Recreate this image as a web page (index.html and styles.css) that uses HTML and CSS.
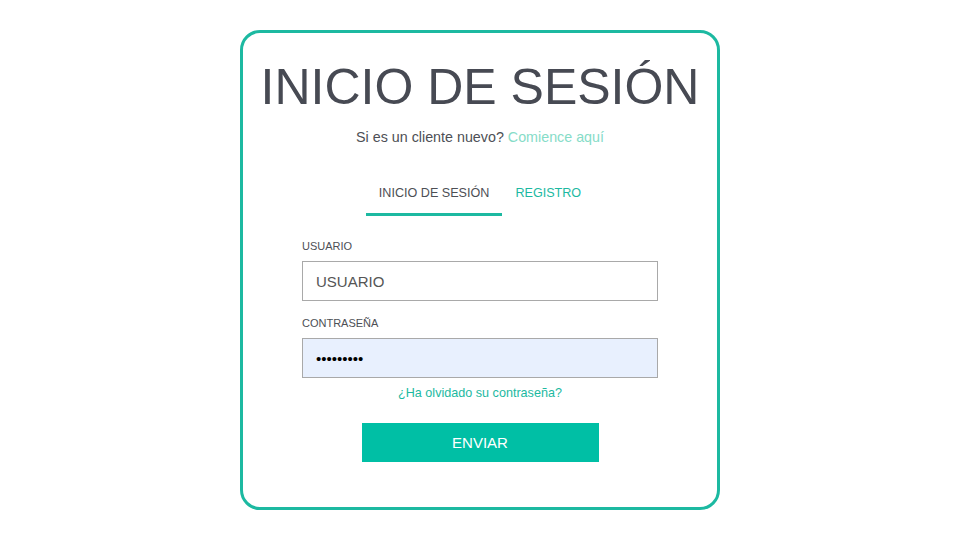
FILE: index.html
```html
<!DOCTYPE html>
<html lang="es">
<head>
    <meta charset="UTF-8">
    <meta name="viewport" content="width=device-width, initial-scale=1.0">
    <title>Inicio de sesión</title>
    <link rel="stylesheet" href="styles.css">
</head>
<body>
    <div class="login-card">
        <h1 class="login-title">INICIO DE SESIÓN</h1>
        <p class="login-sub">Si es un cliente nuevo? <a href="#" class="sub-link">Comience aquí</a></p>

        <div class="tabs">
            <a href="#" class="tab active">INICIO DE SESIÓN</a>
            <a href="#" class="tab">REGISTRO</a>
        </div>

        <form class="login-form">
            <label for="user" class="field-label">USUARIO</label>
            <input type="text" id="user" class="field" value="USUARIO">

            <label for="pass" class="field-label">CONTRASEÑA</label>
            <input type="password" id="pass" class="field filled" value="123456789">

            <a href="#" class="forgot">¿Ha olvidado su contraseña?</a>

            <button type="button" class="submit-btn">ENVIAR</button>
        </form>
    </div>
</body>
</html>
```

FILE: styles.css
```css
body {
    margin: 0;
    padding: 0;
    height: 100vh;
    display: flex;
    justify-content: center;
    align-items: center;
    background: #fff;
    font-family: "Liberation Sans", Arial, sans-serif;
}

.login-card {
    box-sizing: border-box;
    width: 480px;
    height: 480px;
    border: 3px solid #1cb9a1;
    border-radius: 20px;
    display: flex;
    flex-direction: column;
    align-items: center;
}

.login-title {
    margin: 25px 0 0;
    font-size: 50px;
    font-weight: normal;
    line-height: 58px;
    color: #474a53;
}

.login-sub {
    margin: 12px 0 0;
    font-size: 14.3px;
    line-height: 18px;
    color: #4d4f55;
}

.sub-link {
    color: #86dcc8;
    text-decoration: none;
}

.tabs {
    display: flex;
    margin-top: 39px;
}

.tab {
    padding: 0 13px 12px;
    font-size: 12.6px;
    line-height: 16px;
    color: #1cb9a1;
    text-decoration: none;
    border-bottom: 3px solid transparent;
}

.tab.active {
    color: #4d4f55;
    border-bottom-color: #1cb9a1;
}

.login-form {
    width: 356px;
    display: flex;
    flex-direction: column;
    margin-top: 24px;
}

.field-label {
    font-size: 11px;
    line-height: 13px;
    color: #4d4f55;
    margin-bottom: 8px;
}

.field {
    box-sizing: border-box;
    height: 40px;
    margin: 0 0 16px;
    padding: 0 13px;
    border: 1px solid #a9a9a9;
    font-family: "Liberation Sans", Arial, sans-serif;
    font-size: 15px;
    color: #555;
    background: #fff;
    outline: none;
}

.field.filled {
    background: #e8f0fe;
    color: #000;
    margin-bottom: 7px;
}

.forgot {
    align-self: center;
    font-size: 12.6px;
    line-height: 16px;
    color: #1cb9a1;
    text-decoration: none;
}

.submit-btn {
    align-self: center;
    width: 237px;
    height: 39px;
    margin-top: 22px;
    border: none;
    background: #00bfa5;
    color: #fff;
    font-family: "Liberation Sans", Arial, sans-serif;
    font-size: 15px;
    cursor: pointer;
}
```
